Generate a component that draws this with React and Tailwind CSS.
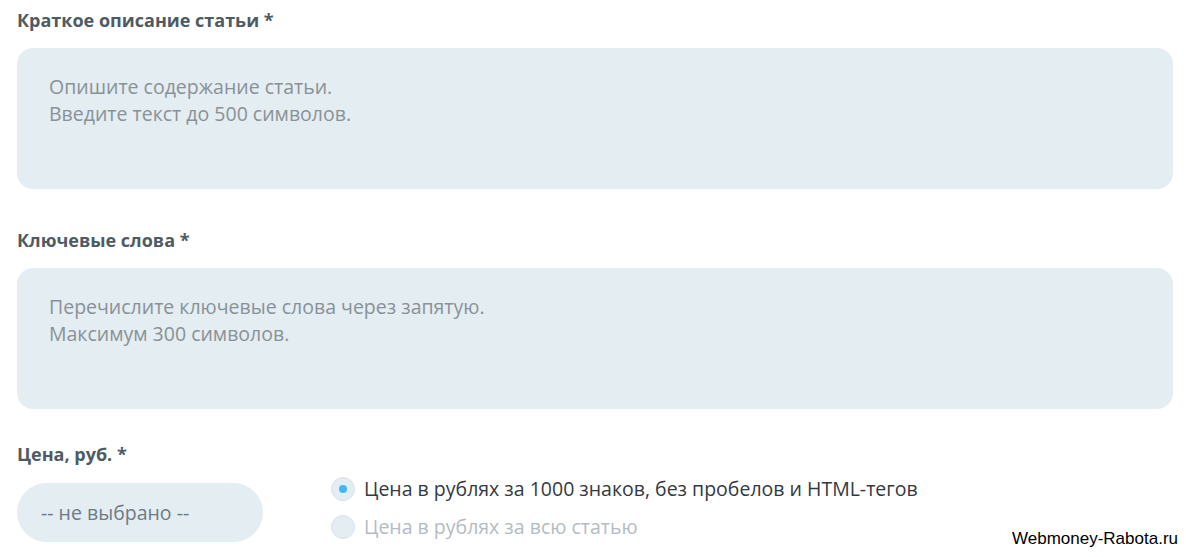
export default function App() {
    return (
        <div
            className="relative w-[1186px] h-[557px] overflow-hidden bg-white pl-[17px] pr-[13px] pt-[8px]"
            style={{ fontFamily: '"Open Sans", sans-serif' }}
        >
            <Field label="Краткое описание статьи *" lines={["Опишите содержание статьи.", "Введите текст до 500 символов."]} />
            <div className="h-[39px]" />
            <Field label="Ключевые слова *" lines={["Перечислите ключевые слова через запятую.", "Максимум 300 символов."]} />
            <div className="h-[33px]" />
            <div className="text-[18px] leading-[24px] font-bold text-[#4f5b63]">Цена, руб. *</div>
            <div className="mt-[17px] flex items-start gap-[68px]">
                <div className="w-[246px] h-[59px] rounded-full bg-[#e3edf2] flex items-center pl-[24px] text-[19.5px] text-[#6e7b84]">
                    -- не выбрано --
                </div>
                <div className="-mt-[6px] flex flex-col gap-[14px]">
                    <label className="flex items-center gap-[9px]">
                        <span className="w-[24px] h-[24px] rounded-full bg-[#e3edf2] border border-[#d6e3ea] flex items-center justify-center">
                            <span className="w-[8px] h-[8px] rounded-full bg-[#3bbaf6]" />
                        </span>
                        <span className="text-[19.5px] leading-[24px] text-[#333a3f]">
                            Цена в рублях за 1000 знаков, без пробелов и HTML-тегов
                        </span>
                    </label>
                    <label className="flex items-center gap-[9px]">
                        <span className="w-[24px] h-[24px] rounded-full bg-[#e3edf2] border border-[#d6e3ea]" />
                        <span className="text-[19.5px] leading-[24px] text-[#b3bcc2]">Цена в рублях за всю статью</span>
                    </label>
                </div>
            </div>
            <div
                className="absolute right-[8px] bottom-[8px] text-[17px] leading-[20px] text-black"
                style={{ fontFamily: '"Liberation Sans", Arial, sans-serif' }}
            >
                Webmoney-Rabota.ru
            </div>
        </div>
    )
}

function Field({ label, lines }) {
    return (
        <div>
            <div className="text-[18px] leading-[24px] font-bold text-[#4f5b63]">{label}</div>
            <div className="mt-[16px] h-[141px] rounded-[16px] bg-[#e3edf2] pl-[32px] pt-[25px] text-[19.5px] leading-[27px] text-[#8a9197]">
                {lines.map((l, i) => (
                    <div key={i}>{l}</div>
                ))}
            </div>
        </div>
    )
}
